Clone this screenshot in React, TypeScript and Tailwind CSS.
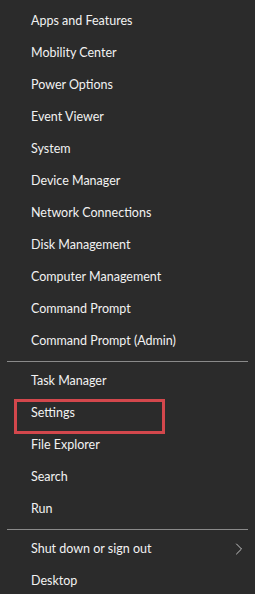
import { ChevronRight } from 'lucide-react';

const groupA = [
  'Apps and Features',
  'Mobility Center',
  'Power Options',
  'Event Viewer',
  'System',
  'Device Manager',
  'Network Connections',
  'Disk Management',
  'Computer Management',
  'Command Prompt',
  'Command Prompt (Admin)',
];

const groupB = ['Task Manager', 'Settings', 'File Explorer', 'Search', 'Run'];

function Item({ label, arrow }: { label: string; arrow?: boolean }) {
  return (
    <li className="h-8 flex items-center justify-between pl-[31px] pr-[6px] pt-[2px]">
      <span>{label}</span>
      {arrow && <ChevronRight size={20} strokeWidth={1.2} className="text-[#c4c4c4]" />}
    </li>
  );
}

function Separator() {
  return <li className="h-px mt-[5px] mb-[2px] mx-[7px] bg-[#8a8a8a]" />;
}

export default function App() {
  return (
    <div
      className="relative w-[255px] h-[594px] overflow-hidden bg-[#2b2b2b] text-[#f2f2f2] text-[12.5px] pt-1"
      style={{ fontFamily: 'Lato, "Noto Sans", sans-serif' }}
    >
      <ul>
        {groupA.map((l) => (
          <Item key={l} label={l} />
        ))}
        <Separator />
        {groupB.map((l) => (
          <Item key={l} label={l} />
        ))}
        <Separator />
        <Item label="Shut down or sign out" arrow />
        <Item label="Desktop" />
      </ul>
      {/* highlight around Settings */}
      <div className="absolute left-[14px] top-[399px] w-[151px] h-[35px] border-[3px] border-[#d3474c]" />
    </div>
  );
}
